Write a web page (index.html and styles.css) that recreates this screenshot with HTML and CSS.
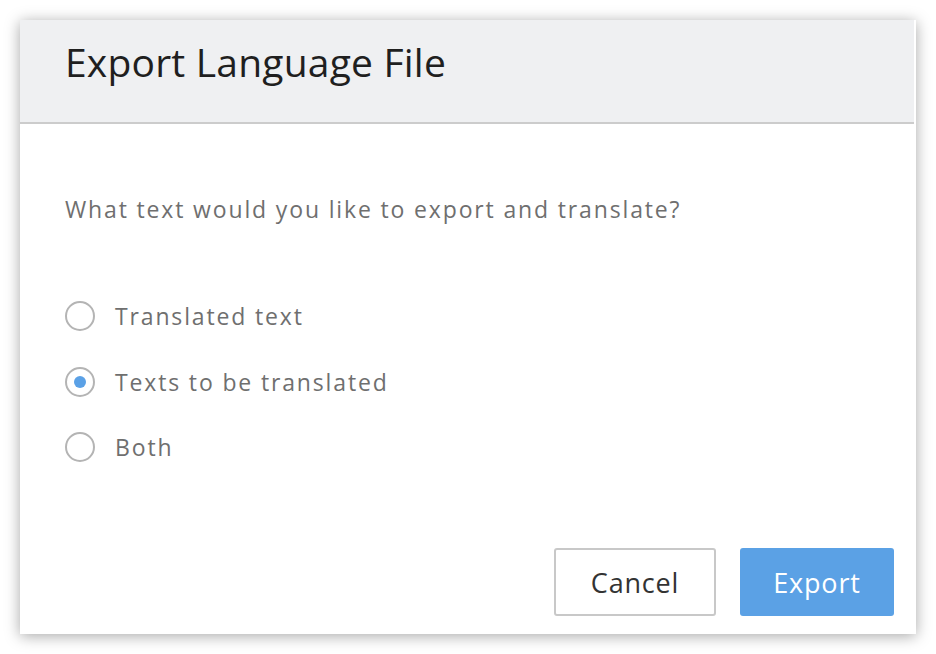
FILE: index.html
```html
<!DOCTYPE html>
<html>
<head>
<meta charset="utf-8">
<link rel="stylesheet" href="styles.css">
</head>
<body>
<div class="dialog">
  <div class="header"><h1 class="title">Export Language File</h1></div>
  <div class="body">
    <p class="question">What text would you like to export and translate?</p>
    <div class="options">
      <label class="option"><span class="radio"></span><span class="label">Translated text</span></label>
      <label class="option"><span class="radio checked"></span><span class="label">Texts to be translated</span></label>
      <label class="option"><span class="radio"></span><span class="label">Both</span></label>
    </div>
  </div>
  <div class="footer">
    <button class="btn cancel">Cancel</button>
    <button class="btn primary">Export</button>
  </div>
</div>
</body>
</html>
```
FILE: styles.css
```css
html, body { margin: 0; padding: 0; background: #fff; }
body { padding: 20px; font-family: "Open Sans", "Lato", sans-serif; }
.dialog {
  width: 896px;
  height: 614px;
  background: #fff;
  box-shadow: 0 2px 14px rgba(0,0,0,0.35);
  display: flex;
  flex-direction: column;
  box-sizing: border-box;
}
.header {
  height: 104px;
  box-sizing: border-box;
  background: #eff0f2;
  border-bottom: 2px solid #cccccc;
  margin-right: 2px;
  padding-left: 45px;
  display: flex;
  align-items: center;
}
.title {
  margin: 0;
  margin-top: -20px;
  font-weight: 400;
  font-size: 39px;
  letter-spacing: 0.2px;
  color: #1f1f1f;
}
.body { padding: 0 45px; flex: 1; }
.question {
  margin: 70px 0 0;
  font-size: 23px;
  letter-spacing: 1.85px;
  color: #6f6f6f;
  line-height: 30px;
}
.options { margin-top: 77px; display: flex; flex-direction: column; gap: 35.5px; }
.option { display: flex; align-items: center; height: 30px; }
.radio {
  width: 30px; height: 30px; box-sizing: border-box;
  border: 2px solid #b4b4b4; border-radius: 50%;
  display: flex; align-items: center; justify-content: center;
  margin-right: 20px;
}
.radio.checked::after {
  content: ""; width: 12px; height: 12px; border-radius: 50%; background: #5ba1e6;
}
.label { font-size: 23px; letter-spacing: 1.85px; color: #6f6f6f; }
.footer {
  display: flex; justify-content: flex-end; gap: 24px;
  padding: 0 22px 18px 0;
}
.btn {
  font-family: inherit; font-size: 27px; letter-spacing: 0.8px; border-radius: 3px; cursor: pointer;
  height: 68px;
}
.cancel { width: 162px; background: #fff; border: 2px solid #c8c8c8; color: #333; }
.primary { width: 154px; background: #5ba1e5; border: none; color: #fff; }
```
